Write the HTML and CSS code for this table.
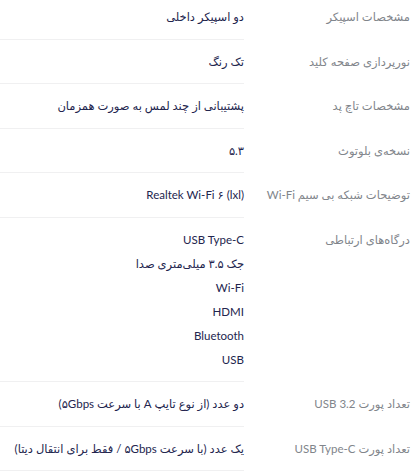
FILE: index.html
```html
<!DOCTYPE html>
<html lang="fa" dir="rtl">
<head>
<meta charset="utf-8">
<link rel="stylesheet" href="styles.css">
</head>
<body>
<div class="specs">
  <div class="row">
    <div class="label">مشخصات اسپیکر</div>
    <div class="value"><div class="item">دو اسپیکر داخلی</div></div>
  </div>
  <div class="row">
    <div class="label">نورپردازی صفحه کلید</div>
    <div class="value"><div class="item">تک رنگ</div></div>
  </div>
  <div class="row">
    <div class="label">مشخصات تاچ پد</div>
    <div class="value"><div class="item">پشتیبانی از چند لمس به صورت همزمان</div></div>
  </div>
  <div class="row">
    <div class="label">نسخه‌ی بلوتوث</div>
    <div class="value"><div class="item">۵.۳</div></div>
  </div>
  <div class="row">
    <div class="label">توضیحات شبکه بی سیم Wi-Fi</div>
    <div class="value"><div class="item">Realtek Wi-Fi ۶ (lxl)</div></div>
  </div>
  <div class="row">
    <div class="label">درگاه‌های ارتباطی</div>
    <div class="value">
      <div class="item">USB Type-C</div>
      <div class="item">جک ۳.۵ میلی‌متری صدا</div>
      <div class="item">Wi-Fi</div>
      <div class="item">HDMI</div>
      <div class="item">Bluetooth</div>
      <div class="item">USB</div>
    </div>
  </div>
  <div class="row">
    <div class="label">تعداد پورت USB 3.2</div>
    <div class="value"><div class="item">دو عدد (از نوع تایپ A با سرعت ۵Gbps)</div></div>
  </div>
  <div class="row">
    <div class="label">تعداد پورت USB Type-C</div>
    <div class="value"><div class="item">یک عدد (با سرعت ۵Gbps / فقط برای انتقال دیتا)</div></div>
  </div>
</div>
</body>
</html>
```
FILE: styles.css
```css
html, body {
  margin: 0;
  padding: 0;
  background: #ffffff;
}
body {
  font-family: Lato, "DejaVu Sans", sans-serif;
  font-size: 11.5px;
  overflow: hidden;
}
.specs {
  margin-top: -5px;
  display: flex;
  flex-direction: column;
}
.row {
  display: flex;
  flex-direction: row;
}
.label {
  width: 166px;
  padding: 10px 10px 0 0;
  line-height: 24px;
  color: #81858b;
  flex-shrink: 0;
}
.value {
  width: 244px;
  padding: 10px 0 9.5px 0;
  border-bottom: 1px solid #f0f0f1;
  color: #23254e;
}
.item {
  line-height: 24px;
  white-space: nowrap;
}
```
